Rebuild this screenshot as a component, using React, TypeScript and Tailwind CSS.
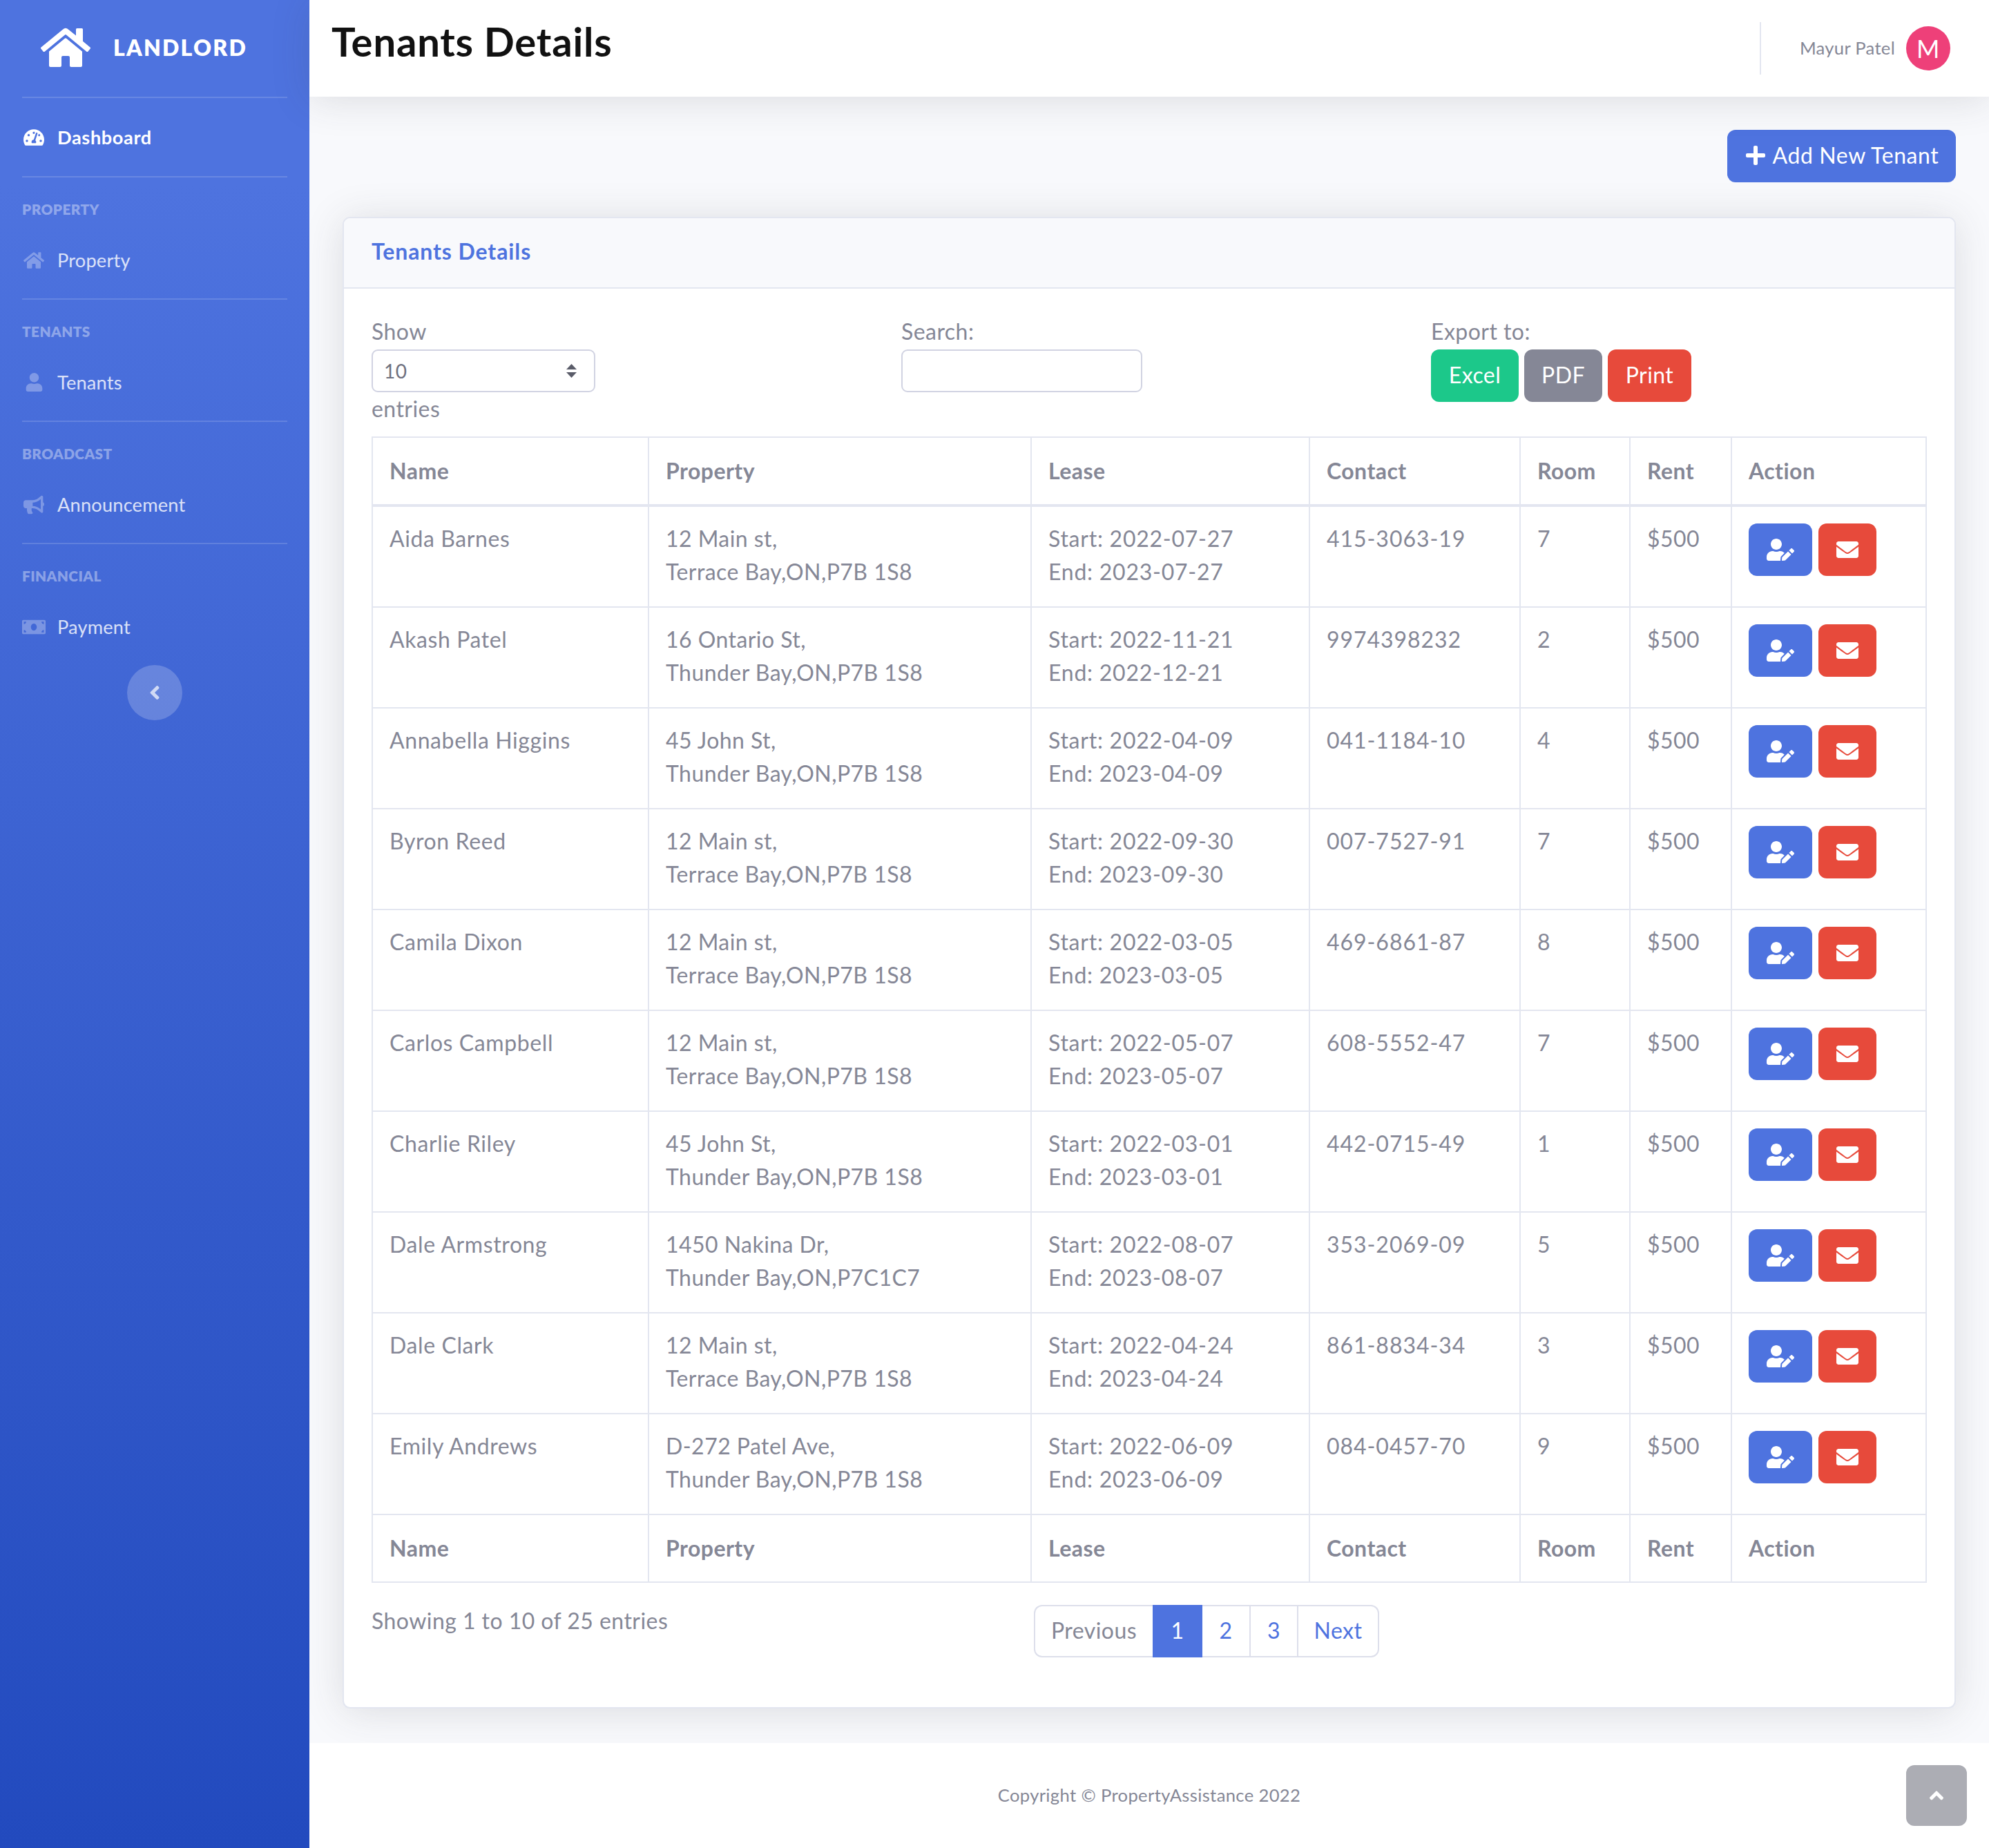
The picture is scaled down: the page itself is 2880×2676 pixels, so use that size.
import {
  FaAngleLeft,
  FaAngleUp,
  FaBullhorn,
  FaEnvelope,
  FaHome,
  FaMoneyBill,
  FaPlus,
  FaTachometerAlt,
  FaUser,
  FaUserEdit,
} from "react-icons/fa";

const tenants = [
  ["Aida Barnes", "12 Main st,", "Terrace Bay,ON,P7B 1S8", "2022-07-27", "2023-07-27", "415-3063-19", "7"],
  ["Akash Patel", "16 Ontario St,", "Thunder Bay,ON,P7B 1S8", "2022-11-21", "2022-12-21", "9974398232", "2"],
  ["Annabella Higgins", "45 John St,", "Thunder Bay,ON,P7B 1S8", "2022-04-09", "2023-04-09", "041-1184-10", "4"],
  ["Byron Reed", "12 Main st,", "Terrace Bay,ON,P7B 1S8", "2022-09-30", "2023-09-30", "007-7527-91", "7"],
  ["Camila Dixon", "12 Main st,", "Terrace Bay,ON,P7B 1S8", "2022-03-05", "2023-03-05", "469-6861-87", "8"],
  ["Carlos Campbell", "12 Main st,", "Terrace Bay,ON,P7B 1S8", "2022-05-07", "2023-05-07", "608-5552-47", "7"],
  ["Charlie Riley", "45 John St,", "Thunder Bay,ON,P7B 1S8", "2022-03-01", "2023-03-01", "442-0715-49", "1"],
  ["Dale Armstrong", "1450 Nakina Dr,", "Thunder Bay,ON,P7C1C7", "2022-08-07", "2023-08-07", "353-2069-09", "5"],
  ["Dale Clark", "12 Main st,", "Terrace Bay,ON,P7B 1S8", "2022-04-24", "2023-04-24", "861-8834-34", "3"],
  ["Emily Andrews", "D-272 Patel Ave,", "Thunder Bay,ON,P7B 1S8", "2022-06-09", "2023-06-09", "084-0457-70", "9"],
];

const columns = ["Name", "Property", "Lease", "Contact", "Room", "Rent", "Action"];

function Divider() {
  return <hr className="mx-8 border-0 border-t-2 border-white/15" />;
}

function NavItem({ icon, label, active, tall }: { icon: React.ReactNode; label: string; active?: boolean; tall?: boolean }) {
  return (
    <div
      className={`flex items-center px-8 text-[27.2px] ${tall ? "h-[114px] pt-[3px]" : "h-[113px]"} ${
        active ? "font-bold tracking-[0.6px] text-white" : "tracking-[0.2px] text-white/80"
      }`}
    >
      <span className={`flex w-[34px] justify-center ${active ? "text-white" : "text-white/30"}`}>{icon}</span>
      <span className="ml-[17px]">{label}</span>
    </div>
  );
}

function NavSection({ title, icon, label }: { title: string; icon: React.ReactNode; label: string }) {
  return (
    <>
      <Divider />
      <div className="mt-[30px] px-8 text-[20.8px] leading-[31px] font-extrabold tracking-[0.4px] text-white/40 uppercase">{title}</div>
      <NavItem tall icon={icon} label={label} />
    </>
  );
}

function Sidebar() {
  return (
    <aside className="flex w-[448px] shrink-0 flex-col bg-[linear-gradient(180deg,#4e73df_10%,#224abe_100%)]">
      <div className="flex h-[140px] items-center pb-[3px] pl-[59px] text-white">
        <FaHome size={72} />
        <span className="ml-[33px] text-[32px] font-extrabold tracking-[2.2px] uppercase">Landlord</span>
      </div>
      <Divider />
      <NavItem active icon={<FaTachometerAlt size={30} />} label="Dashboard" />
      <NavSection title="Property" icon={<FaHome size={30} />} label="Property" />
      <NavSection title="Tenants" icon={<FaUser size={27} />} label="Tenants" />
      <NavSection title="Broadcast" icon={<FaBullhorn size={30} />} label="Announcement" />
      <NavSection title="Financial" icon={<FaMoneyBill size={34} />} label="Payment" />
      <button className="mx-auto flex size-20 items-center justify-center rounded-full bg-white/20 text-white/70">
        <FaAngleLeft size={32} />
      </button>
    </aside>
  );
}

function Topbar() {
  return (
    <header className="relative z-10 flex h-[140px] items-start justify-between bg-white pr-[56px] pl-8 shadow-[0_4.8px_56px_0_rgba(58,59,69,0.15)]">
      <h1 className="mt-[24px] text-[58px] leading-[72px] font-bold tracking-[0.8px] text-[#111]">Tenants Details</h1>
      <div className="flex h-[140px] items-center">
        <div className="h-[76px] w-[2px] bg-[#e3e6f0]" />
        <span className="ml-[56px] pb-[2px] text-[25.6px] tracking-[0.3px] text-[#858796]">Mayur Patel</span>
        <span className="ml-4 flex size-16 items-center justify-center rounded-full bg-[#ee4079] text-[36px] text-white">M</span>
      </div>
    </header>
  );
}

function TenantRow({ row }: { row: string[] }) {
  const cell = "border-2 border-[#e3e6f0] px-6 pt-[22px] pb-[26px] align-top";
  return (
    <tr>
      <td className={`${cell} tracking-[0.6px]`}>{row[0]}</td>
      <td className={cell}>
        {row[1]}
        <br />
        {row[2]}
      </td>
      <td className={`${cell} tracking-[0.75px]`}>
        Start: {row[3]}
        <br />
        End: {row[4]}
      </td>
      <td className={`${cell} tracking-[0.95px]`}>{row[5]}</td>
      <td className={cell}>{row[6]}</td>
      <td className={cell}>$500</td>
      <td className="border-2 border-[#e3e6f0] p-6 align-top">
        <div className="flex gap-[9px]">
          <button className="flex h-[76px] w-[92px] items-center justify-center rounded-xl bg-[#4e73df] text-white">
            <FaUserEdit size={40} />
          </button>
          <button className="flex h-[76px] w-[84px] items-center justify-center rounded-xl bg-[#e74a3b] text-white">
            <FaEnvelope size={32} />
          </button>
        </div>
      </td>
    </tr>
  );
}

function TenantsTable() {
  return (
    <table className="mt-4 w-full table-fixed border-collapse">
      <colgroup>
        <col className="w-[400px]" />
        <col className="w-[554px]" />
        <col className="w-[403px]" />
        <col className="w-[305px]" />
        <col className="w-[159px]" />
        <col className="w-[147px]" />
        <col />
      </colgroup>
      <thead>
        <tr>
          {columns.map((c) => (
            <th key={c} className="border-2 border-b-4 border-[#e3e6f0] p-6 text-left font-bold">
              {c}
            </th>
          ))}
        </tr>
      </thead>
      <tbody>
        {tenants.map((t) => (
          <TenantRow key={t[0]} row={t} />
        ))}
      </tbody>
      <tfoot>
        <tr>
          {columns.map((c) => (
            <th key={c} className="border-2 border-[#e3e6f0] p-6 text-left font-bold">
              {c}
            </th>
          ))}
        </tr>
      </tfoot>
    </table>
  );
}

function Pagination() {
  const page = "flex h-[76px] items-center justify-center border-y-2 border-[#dddfeb] pb-[2px]";
  return (
    <div className="flex">
      <span className={`${page} w-[172px] rounded-l-xl border-l-2`}>Previous</span>
      <span className="flex h-[76px] w-[72px] items-center justify-center bg-[#4e73df] pb-[2px] text-white">1</span>
      <span className={`${page} w-[68px] text-[#4e73df]`}>2</span>
      <span className={`${page} w-[69px] border-l-2 text-[#4e73df]`}>3</span>
      <span className={`${page} w-[119px] rounded-r-xl border-x-2 text-[#4e73df]`}>Next</span>
    </div>
  );
}

function TenantsCard() {
  const label = "mb-[4px] leading-[44px]";
  const exportBtn = "flex h-[76px] items-center justify-center rounded-xl pb-[2px]";
  return (
    <section className="rounded-[11px] border-2 border-[#e3e6f0] bg-white shadow-[0_4.8px_56px_0_rgba(58,59,69,0.15)]">
      <div className="rounded-t-[9px] border-b-2 border-[#e3e6f0] bg-[#f8f9fc] px-10 pt-[22px] pb-[26px]">
        <h2 className="text-[32px] leading-[52px] font-bold tracking-[0.9px] text-[#4e73df]">Tenants Details</h2>
      </div>
      <div className="px-10 pt-10 pb-10">
        <div className="grid grid-cols-[767px_767px_1fr]">
          <div>
            <div className={label}>Show</div>
            <div className="flex h-[62px] w-[324px] items-center justify-between rounded-[9px] border-2 border-[#d1d3e2] pr-[24px] pl-[16px] text-[28px] text-[#6e707e]">
              <span>10</span>
              <svg width="17" height="20" viewBox="0 0 17 20" className="text-[#5a5c69]" fill="currentColor">
                <path d="M8.5 0 L16 8 H1 Z M1 12 H16 L8.5 20 Z" />
              </svg>
            </div>
            <div>entries</div>
          </div>
          <div>
            <div className={label}>Search:</div>
            <input className="block h-[62px] w-[349px] rounded-[9px] border-2 border-[#d1d3e2] bg-white" />
          </div>
          <div>
            <div className={label}>Export to:</div>
            <div className="flex gap-2 text-white">
              <button className={`${exportBtn} w-[127px] bg-[#1cc88a]`}>Excel</button>
              <button className={`${exportBtn} w-[113px] bg-[#858796]`}>PDF</button>
              <button className={`${exportBtn} w-[121px] bg-[#e74a3b]`}>Print</button>
            </div>
          </div>
        </div>
        <TenantsTable />
        <div className="mt-8 mb-8 grid grid-cols-[959px_1fr]">
          <div className="leading-[46px]">Showing 1 to 10 of 25 entries</div>
          <Pagination />
        </div>
      </div>
    </section>
  );
}

export default function App() {
  return (
    <div className="relative flex min-h-[2676px] bg-[#f8f9fc] font-[Lato,sans-serif] text-[32px] leading-[48px] tracking-[0.45px] text-[#858796]">
      <Sidebar />
      <main className="flex min-w-0 flex-1 flex-col">
        <Topbar />
        <div className="px-12 pt-12">
          <div className="flex justify-end">
            <button className="flex h-[76px] w-[331px] items-center justify-center gap-[9px] rounded-xl bg-[#4e73df] pb-[2px] tracking-[0.6px] text-white">
              <FaPlus size={32} />
              Add New Tenant
            </button>
          </div>
          <div className="mt-[50px]">
            <TenantsCard />
          </div>
        </div>
        <footer className="relative mt-[50px] flex flex-1 items-center justify-center bg-white pb-[2px] text-[25.6px] tracking-[0.35px] text-[#858796]">
          Copyright © PropertyAssistance 2022
        </footer>
      </main>
      <button className="absolute right-8 bottom-8 flex size-[88px] items-center justify-center rounded-xl bg-[#5a5c69]/50 text-white">
        <FaAngleUp size={32} />
      </button>
    </div>
  );
}
